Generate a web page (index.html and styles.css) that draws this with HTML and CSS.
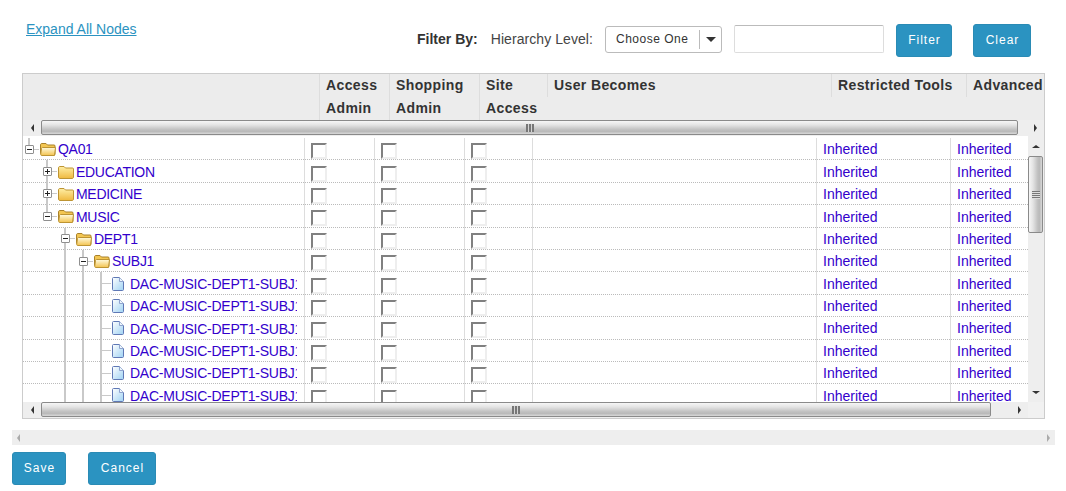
FILE: index.html
```html
<!DOCTYPE html>
<html lang="en">
<head>
  <meta charset="UTF-8">
  <title>Hierarchy Permissions</title>
  <link rel="stylesheet" href="styles.css">
</head>
<body>
  <svg class="icon-defs" aria-hidden="true">
    <defs>
      <linearGradient id="folderFill" x1="0" y1="0" x2="0" y2="1">
        <stop offset="0" stop-color="#ffefa6"/>
        <stop offset="1" stop-color="#efb93f"/>
      </linearGradient>
      <linearGradient id="folderFront" x1="0" y1="0" x2="0" y2="1">
        <stop offset="0" stop-color="#fffbe0"/>
        <stop offset="1" stop-color="#f3c34f"/>
      </linearGradient>
      <linearGradient id="docFill" x1="0" y1="0" x2="1" y2="1">
        <stop offset="0" stop-color="#ffffff"/>
        <stop offset="1" stop-color="#9fd2f3"/>
      </linearGradient>
      <symbol id="folder-closed" viewBox="0 0 16 14">
        <path d="M.5 3C.5 1.800 1.200 1.500 2 1.500H6L7.500 3H14.500C15.200 3 15.500 3.400 15.500 4V12C15.500 12.800 15 13.500 14.200 13.500H1.800C1 13.500 .5 12.800 .5 12Z" fill="url(#folderFill)" stroke="#bd9433"/>
      </symbol>
      <symbol id="folder-open" viewBox="0 0 16 14">
        <path d="M.5 3C.5 1.800 1.200 1.500 2 1.500H6L7.500 3H14C14.800 3 15 3.400 15 4V12.500H1.500L.5 11Z" fill="#f3c652" stroke="#a9812a"/>
        <path d="M2.500 5.500H15.500L14.500 13.500H1.800C1 13.500 .7 13 .7 12.300L1.500 6.500C1.600 5.900 1.900 5.500 2.500 5.500Z" fill="url(#folderFront)" stroke="#bd9433"/>
      </symbol>
      <symbol id="doc" viewBox="0 0 12 14">
        <path d="M.5 1.500C.5 .900 .900 .500 1.500 .500H7.500L11.500 4.500V12.500C11.500 13.100 11.100 13.500 10.500 13.500H1.500C.900 13.500 .5 13.100 .5 12.500Z" fill="url(#docFill)" stroke="#5f78b5"/>
        <path d="M7.500 .500V4.500H11.500" fill="#eef7fd" stroke="#8fa3cf"/>
      </symbol>
    </defs>
  </svg>

  <div class="toolbar">
    <a href="#" class="expand-link">Expand All Nodes</a>
    <div class="filters">
      <strong class="filter-title">Filter By:</strong>
      <span class="filter-label">Hierarchy Level:</span>
      <div class="fake-select"><span class="fake-select-text">Choose One</span><span class="fake-select-arrow"></span></div>
      <input type="text" class="filter-input">
      <button class="btn btn-filter">Filter</button>
      <button class="btn btn-clear">Clear</button>
    </div>
  </div>

  <div class="grid">
    <div class="grid-head">
      <div class="hcell hcell-tree"></div>
      <div class="hcell hcell-access">Access<br>Admin</div>
      <div class="hcell hcell-shop">Shopping<br>Admin</div>
      <div class="hcell hcell-site">Site<br>Access</div>
      <div class="hcell hcell-short hcell-user">User Becomes</div>
      <div class="hcell hcell-short hcell-tools">Restricted Tools</div>
      <div class="hcell hcell-short hcell-adv">Advanced</div>
    </div>

    <div class="hbar">
      <span class="arrow-btn"><i class="tri tri-left"></i></span>
      <span class="thumb thumb-top"><i class="grip"></i></span>
      <span class="arrow-btn arrow-end"><i class="tri tri-right"></i></span>
    </div>

    <div class="grid-body">
      <div class="rows">
        <div class="row">
          <div class="tree"><span class="slot top"><i class="exp minus"></i><i class="conn"></i></span><svg class="folder"><use href="#folder-open"/></svg><a href="#" class="node">QA01</a></div>
          <div class="cell"><span class="chk"></span></div><div class="cell"><span class="chk"></span></div><div class="cell"><span class="chk"></span></div><div class="cell"></div>
          <div class="cell"><a href="#" class="val">Inherited</a></div><div class="cell last"><a href="#" class="val">Inherited</a></div>
        </div>
        <div class="row">
          <div class="tree"><span class="slot"></span><span class="slot full"><i class="exp plus"></i><i class="conn"></i></span><svg class="folder"><use href="#folder-closed"/></svg><a href="#" class="node">EDUCATION</a></div>
          <div class="cell"><span class="chk"></span></div><div class="cell"><span class="chk"></span></div><div class="cell"><span class="chk"></span></div><div class="cell"></div>
          <div class="cell"><a href="#" class="val">Inherited</a></div><div class="cell last"><a href="#" class="val">Inherited</a></div>
        </div>
        <div class="row">
          <div class="tree"><span class="slot"></span><span class="slot full"><i class="exp plus"></i><i class="conn"></i></span><svg class="folder"><use href="#folder-closed"/></svg><a href="#" class="node">MEDICINE</a></div>
          <div class="cell"><span class="chk"></span></div><div class="cell"><span class="chk"></span></div><div class="cell"><span class="chk"></span></div><div class="cell"></div>
          <div class="cell"><a href="#" class="val">Inherited</a></div><div class="cell last"><a href="#" class="val">Inherited</a></div>
        </div>
        <div class="row">
          <div class="tree"><span class="slot"></span><span class="slot top"><i class="exp minus"></i><i class="conn"></i></span><svg class="folder"><use href="#folder-open"/></svg><a href="#" class="node">MUSIC</a></div>
          <div class="cell"><span class="chk"></span></div><div class="cell"><span class="chk"></span></div><div class="cell"><span class="chk"></span></div><div class="cell"></div>
          <div class="cell"><a href="#" class="val">Inherited</a></div><div class="cell last"><a href="#" class="val">Inherited</a></div>
        </div>
        <div class="row">
          <div class="tree"><span class="slot"></span><span class="slot"></span><span class="slot full"><i class="exp minus"></i><i class="conn"></i></span><svg class="folder"><use href="#folder-open"/></svg><a href="#" class="node">DEPT1</a></div>
          <div class="cell"><span class="chk"></span></div><div class="cell"><span class="chk"></span></div><div class="cell"><span class="chk"></span></div><div class="cell"></div>
          <div class="cell"><a href="#" class="val">Inherited</a></div><div class="cell last"><a href="#" class="val">Inherited</a></div>
        </div>
        <div class="row">
          <div class="tree"><span class="slot"></span><span class="slot"></span><span class="slot full"></span><span class="slot full"><i class="exp minus"></i><i class="conn"></i></span><svg class="folder"><use href="#folder-open"/></svg><a href="#" class="node">SUBJ1</a></div>
          <div class="cell"><span class="chk"></span></div><div class="cell"><span class="chk"></span></div><div class="cell"><span class="chk"></span></div><div class="cell"></div>
          <div class="cell"><a href="#" class="val">Inherited</a></div><div class="cell last"><a href="#" class="val">Inherited</a></div>
        </div>
        <div class="row">
          <div class="tree"><span class="slot"></span><span class="slot"></span><span class="slot full"></span><span class="slot full"></span><span class="slot full leaf"><i class="conn"></i></span><svg class="file"><use href="#doc"/></svg><a href="#" class="node node-file">DAC-MUSIC-DEPT1-SUBJ1-SEC01</a></div>
          <div class="cell"><span class="chk"></span></div><div class="cell"><span class="chk"></span></div><div class="cell"><span class="chk"></span></div><div class="cell"></div>
          <div class="cell"><a href="#" class="val">Inherited</a></div><div class="cell last"><a href="#" class="val">Inherited</a></div>
        </div>
        <div class="row">
          <div class="tree"><span class="slot"></span><span class="slot"></span><span class="slot full"></span><span class="slot full"></span><span class="slot full leaf"><i class="conn"></i></span><svg class="file"><use href="#doc"/></svg><a href="#" class="node node-file">DAC-MUSIC-DEPT1-SUBJ1-SEC02</a></div>
          <div class="cell"><span class="chk"></span></div><div class="cell"><span class="chk"></span></div><div class="cell"><span class="chk"></span></div><div class="cell"></div>
          <div class="cell"><a href="#" class="val">Inherited</a></div><div class="cell last"><a href="#" class="val">Inherited</a></div>
        </div>
        <div class="row">
          <div class="tree"><span class="slot"></span><span class="slot"></span><span class="slot full"></span><span class="slot full"></span><span class="slot full leaf"><i class="conn"></i></span><svg class="file"><use href="#doc"/></svg><a href="#" class="node node-file">DAC-MUSIC-DEPT1-SUBJ1-SEC03</a></div>
          <div class="cell"><span class="chk"></span></div><div class="cell"><span class="chk"></span></div><div class="cell"><span class="chk"></span></div><div class="cell"></div>
          <div class="cell"><a href="#" class="val">Inherited</a></div><div class="cell last"><a href="#" class="val">Inherited</a></div>
        </div>
        <div class="row">
          <div class="tree"><span class="slot"></span><span class="slot"></span><span class="slot full"></span><span class="slot full"></span><span class="slot full leaf"><i class="conn"></i></span><svg class="file"><use href="#doc"/></svg><a href="#" class="node node-file">DAC-MUSIC-DEPT1-SUBJ1-SEC04</a></div>
          <div class="cell"><span class="chk"></span></div><div class="cell"><span class="chk"></span></div><div class="cell"><span class="chk"></span></div><div class="cell"></div>
          <div class="cell"><a href="#" class="val">Inherited</a></div><div class="cell last"><a href="#" class="val">Inherited</a></div>
        </div>
        <div class="row">
          <div class="tree"><span class="slot"></span><span class="slot"></span><span class="slot full"></span><span class="slot full"></span><span class="slot full leaf"><i class="conn"></i></span><svg class="file"><use href="#doc"/></svg><a href="#" class="node node-file">DAC-MUSIC-DEPT1-SUBJ1-SEC05</a></div>
          <div class="cell"><span class="chk"></span></div><div class="cell"><span class="chk"></span></div><div class="cell"><span class="chk"></span></div><div class="cell"></div>
          <div class="cell"><a href="#" class="val">Inherited</a></div><div class="cell last"><a href="#" class="val">Inherited</a></div>
        </div>
        <div class="row">
          <div class="tree"><span class="slot"></span><span class="slot"></span><span class="slot full"></span><span class="slot full"></span><span class="slot full leaf"><i class="conn"></i></span><svg class="file"><use href="#doc"/></svg><a href="#" class="node node-file">DAC-MUSIC-DEPT1-SUBJ1-SEC06</a></div>
          <div class="cell"><span class="chk"></span></div><div class="cell"><span class="chk"></span></div><div class="cell"><span class="chk"></span></div><div class="cell"></div>
          <div class="cell"><a href="#" class="val">Inherited</a></div><div class="cell last"><a href="#" class="val">Inherited</a></div>
        </div>
      </div>
      <div class="vbar">
        <span class="vbar-btn"><i class="tri tri-up"></i></span>
        <span class="vthumb"><i class="vgrip"></i></span>
        <span class="vbar-btn vbar-end"><i class="tri tri-down"></i></span>
      </div>
    </div>

    <div class="hbar">
      <span class="arrow-btn"><i class="tri tri-left"></i></span>
      <span class="thumb thumb-bottom"><i class="grip"></i></span>
      <span class="arrow-btn arrow-end arrow-bottom"><i class="tri tri-right"></i></span>
      <span class="corner"></span>
    </div>
  </div>

  <div class="page-scroll">
    <i class="tri tri-left tri-soft"></i>
    <i class="tri tri-right tri-soft"></i>
  </div>

  <div class="actions">
    <button class="btn btn-save">Save</button>
    <button class="btn btn-cancel">Cancel</button>
  </div>
</body>
</html>
```
FILE: styles.css
```css
body {
  font-family: "Liberation Sans", Arial, sans-serif;
  font-size: 14px;
  background-color: #fff;
  color: #333;
  margin: 0;
  padding: 0;
}
.icon-defs {
  display: block;
  width: 0;
  height: 0;
}
.toolbar {
  display: flex;
  height: 73px;
}
.expand-link {
  margin: 21px 0 0 26px;
  line-height: 16px;
  height: 17px;
  color: #2b93c1;
}
.filters {
  display: flex;
  align-items: center;
  gap: 12px;
  height: 33px;
  margin: 24px 35px 0 auto;
}
.filter-title {
  margin: 0 1px 3px 0;
  color: #333;
}
.filter-label {
  margin-bottom: 3px;
  color: #444;
  letter-spacing: .07px;
}
.fake-select {
  display: flex;
  align-items: center;
  box-sizing: border-box;
  width: 117px;
  height: 27px;
  margin-bottom: 3px;
  border: 1px solid #bbb;
  border-radius: 3px;
  font-size: 12px;
  letter-spacing: .5px;
  color: #333;
}
.fake-select-text {
  width: 83px;
  padding-left: 10px;
}
.fake-select-arrow {
  display: flex;
  align-items: center;
  justify-content: center;
  width: 21px;
  height: 19px;
  border-left: 1px solid #bbb;
}
.fake-select-arrow::after {
  content: "";
  border-left: 5px solid transparent;
  border-right: 5px solid transparent;
  border-top: 5px solid #333;
}
.filter-input {
  box-sizing: border-box;
  width: 150px;
  height: 28px;
  margin: 0 0 3px;
  padding: 0;
  border: 1px solid #ddd;
  border-top-color: #bbb;
  border-radius: 2px;
}
.btn {
  height: 33px;
  padding: 0 0 2px 1px;
  background-color: #2b93c1;
  color: #fff;
  border: 1px solid #2a8bb5;
  border-radius: 3px;
  font-family: inherit;
  font-size: 12px;
  letter-spacing: 1px;
}
.btn-filter {
  width: 56px;
}
.btn-clear {
  width: 58px;
  margin-left: 9px;
}
.btn-save {
  width: 54px;
}
.btn-cancel {
  width: 68px;
}

.grid {
  box-sizing: border-box;
  width: 1023px;
  height: 346px;
  margin-left: 22px;
  border: 1px solid #ccc;
  display: flex;
  flex-direction: column;
}
.grid-head {
  display: flex;
  flex: none;
  height: 46px;
  overflow: hidden;
  background-color: #ececec;
  font-weight: bold;
  line-height: 23px;
  letter-spacing: .38px;
  color: #333;
}
.hcell {
  box-sizing: border-box;
  flex: none;
  padding-left: 6px;
  border-left: 1px solid #ddd;
  white-space: nowrap;
}
.hcell-tree {
  width: 296px;
  padding: 0;
  border: 0;
}
.hcell-access {
  width: 70px;
}
.hcell-shop {
  width: 90px;
}
.hcell-site {
  width: 68px;
}
.hcell-short {
  height: 23px;
}
.hcell-user {
  width: 284px;
}
.hcell-tools {
  width: 135px;
}
.hcell-adv {
  width: 90px;
}

.hbar {
  display: flex;
  flex: none;
  height: 16px;
  background-color: #eee;
}
.arrow-btn {
  display: flex;
  align-items: center;
  justify-content: center;
  flex: none;
  width: 18px;
}
.arrow-end {
  width: 17px;
  margin-left: auto;
}
.thumb {
  display: flex;
  align-items: center;
  justify-content: center;
  box-sizing: border-box;
  flex: none;
  height: 15px;
  border: 1px solid #8a8a8a;
  border-radius: 2px;
  background: linear-gradient(#f6f6f6, #e4e4e4 30%, #c2c2c2 65%, #b9b9b9 80%, #d8d8d8);
}
.thumb-top {
  width: 977px;
}
.thumb-bottom {
  width: 950px;
}
.grip {
  width: 8px;
  height: 8px;
  background: repeating-linear-gradient(90deg, #777 0, #777 2px, #d4d4d4 2px, #d4d4d4 3px);
}
.corner {
  flex: none;
  width: 16px;
  background-color: #f1f1f1;
}
.tri {
  display: block;
  width: 0;
  height: 0;
  border: 0 solid transparent;
}
.tri-left {
  border-width: 4px 3px 4px 0;
  border-right-color: #333;
}
.tri-right {
  border-width: 4px 0 4px 3px;
  border-left-color: #333;
}
.tri-up {
  border-width: 0 4px 3px;
  border-bottom-color: #333;
}
.tri-down {
  border-width: 3px 4px 0;
  border-top-color: #333;
}
.tri-soft {
  border-left-color: #aaa;
  border-right-color: #aaa;
}

.grid-body {
  display: flex;
  flex: none;
  height: 266px;
  overflow: hidden;
}
.rows {
  flex: none;
  width: 1005px;
  box-sizing: border-box;
  padding-top: 2px;
  overflow: hidden;
}
.row {
  box-sizing: border-box;
  display: grid;
  grid-template-columns: 282px 70px 90px 68px 284px 134px 77px;
  height: 22.4px;
  border-bottom: 1px dotted #bbb;
}
.tree {
  display: flex;
  align-items: center;
  box-sizing: border-box;
  border-right: 1px solid #ddd;
  margin-bottom: -1px;
}
.slot {
  display: flex;
  align-items: center;
  align-self: stretch;
  flex: none;
  width: 18px;
  padding-left: 2px;
  box-sizing: border-box;
  background-repeat: no-repeat;
  background-position: 5px 0;
}
.full {
  background-image: linear-gradient(#c9c9c9, #c9c9c9);
  background-size: 2px 100%;
}
.top {
  background-image: linear-gradient(#c9c9c9, #c9c9c9);
  background-size: 2px 50%;
}
.leaf {
  padding-left: 7px;
}
.leaf .conn {
  width: 9px;
}
.exp {
  flex: none;
  box-sizing: border-box;
  width: 9px;
  height: 9px;
  border: 1px solid #8f8f8f;
  border-radius: 1px;
  background-color: #fff;
  background-repeat: no-repeat;
}
.minus {
  background-image: linear-gradient(#222, #222);
  background-size: 5px 1px;
  background-position: center;
}
.plus {
  background-image: linear-gradient(#222, #222), linear-gradient(#222, #222);
  background-size: 5px 1px, 1px 5px;
  background-position: center;
}
.conn {
  flex: none;
  width: 5px;
  height: 1px;
  background-color: #c9c9c9;
}
.folder {
  flex: none;
  width: 16px;
  height: 14px;
  margin: 0 2px 0 -1px;
}
.file {
  flex: none;
  width: 12px;
  height: 14px;
  margin: 0 6px 0 -1px;
}
.node, .val {
  color: #3300cc;
  text-decoration: none;
  white-space: nowrap;
}
.node {
  margin-top: .4px;
  letter-spacing: -.3px;
}
.node-file {
  width: 167px;
  letter-spacing: -.25px;
  overflow: hidden;
}
.cell {
  box-sizing: border-box;
  padding: 5.36px 0 0 6px;
  border-right: 1px solid #ddd;
  line-height: 13px;
  margin-bottom: -1px;
}
.cell.last {
  border-right: 0;
}
.chk {
  display: block;
  box-sizing: border-box;
  width: 16px;
  height: 16px;
  margin-top: -.1px;
  border: 2px solid;
  border-color: #808080 #eee #eee #808080;
}

.vbar {
  display: flex;
  flex-direction: column;
  align-items: center;
  flex: none;
  width: 16px;
  background-color: #eee;
}
.vbar-btn {
  display: flex;
  align-items: center;
  justify-content: center;
  flex: none;
  width: 16px;
  height: 20px;
}
.vbar-end {
  margin-top: auto;
}
.vthumb {
  display: flex;
  align-items: center;
  justify-content: center;
  box-sizing: border-box;
  flex: none;
  width: 15px;
  height: 77px;
  margin-right: 1px;
  border: 1px solid #8a8a8a;
  border-radius: 2px;
  background: linear-gradient(90deg, #f6f6f6, #e4e4e4 30%, #c2c2c2 65%, #b9b9b9 80%, #d8d8d8);
}
.vgrip {
  width: 8px;
  height: 8px;
  background: repeating-linear-gradient(#777 0, #777 1px, #ddd 1px, #ddd 2px);
}

.page-scroll {
  display: flex;
  align-items: center;
  justify-content: space-between;
  box-sizing: border-box;
  width: 1043px;
  height: 15px;
  margin: 11px 0 0 12px;
  padding: 0 5px;
  background-color: #eee;
}
.actions {
  display: flex;
  gap: 22px;
  margin: 7px 0 0 12px;
}
```
